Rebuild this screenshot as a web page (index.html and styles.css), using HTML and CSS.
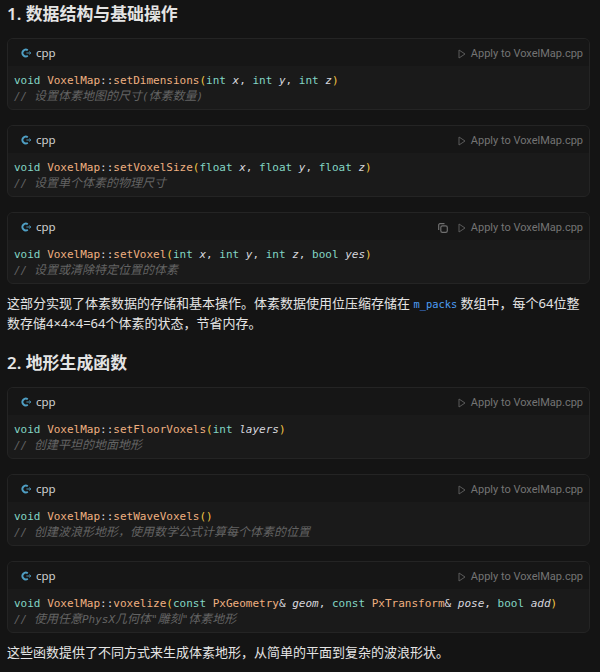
FILE: index.html
```html
<!DOCTYPE html>
<html lang="zh">
<head>
<meta charset="utf-8">
<title>VoxelMap</title>
<link rel="stylesheet" href="styles.css">
</head>
<body>
<svg class="defs" width="0" height="0" aria-hidden="true">
  <symbol id="cpp" viewBox="0 0 10 10">
    <path d="M6.800 2.200A3.400 3.400 0 1 0 6.800 7.800" fill="none" stroke="#4f9fc4" stroke-width="1.900"/>
    <path d="M5.400 5h4.400M8.300 3.600 9.800 5 8.300 6.400" fill="none" stroke="#4f9fc4" stroke-width="0.900"/>
  </symbol>
  <symbol id="play" viewBox="0 0 8 10">
    <path d="M1 1 7 5 1 9Z" fill="none" stroke="#5a5a5a" stroke-width="1"/>
  </symbol>
  <symbol id="copy" viewBox="0 0 10 10">
    <path d="M0.700 7V2A1.300 1.300 0 0 1 2 0.700H6.500" fill="none" stroke="#6f6f6f" stroke-width="1.200"/>
    <rect x="2.800" y="2.800" width="6.500" height="6.500" rx="1.600" fill="none" stroke="#6f6f6f" stroke-width="1.200"/>
  </symbol>
</svg>

<h2 class="title first">1. 数据结构与基础操作</h2>

<section class="block">
  <header class="bar"><svg class="lang"><use href="#cpp"/></svg><span class="name">cpp</span><span class="apply"><svg class="play"><use href="#play"/></svg>Apply to VoxelMap.cpp</span></header>
  <pre class="code"><span class="k">void</span> <span class="f">VoxelMap</span><span class="w">::</span><span class="f">setDimensions</span><span class="y">(</span><span class="k">int</span> <i>x</i><span class="w">,</span> <span class="k">int</span> <i>y</i><span class="w">,</span> <span class="k">int</span> <i>z</i><span class="y">)</span>
<span class="c">// <span class="z">设置体素地图的尺寸</span>(<span class="z">体素数量</span>)</span></pre>
</section>

<section class="block">
  <header class="bar"><svg class="lang"><use href="#cpp"/></svg><span class="name">cpp</span><span class="apply"><svg class="play"><use href="#play"/></svg>Apply to VoxelMap.cpp</span></header>
  <pre class="code"><span class="k">void</span> <span class="f">VoxelMap</span><span class="w">::</span><span class="f">setVoxelSize</span><span class="y">(</span><span class="k">float</span> <i>x</i><span class="w">,</span> <span class="k">float</span> <i>y</i><span class="w">,</span> <span class="k">float</span> <i>z</i><span class="y">)</span>
<span class="c">// <span class="z">设置单个体素的物理尺寸</span></span></pre>
</section>

<section class="block">
  <header class="bar"><svg class="lang"><use href="#cpp"/></svg><span class="name">cpp</span><span class="apply"><svg class="copy"><use href="#copy"/></svg><svg class="play"><use href="#play"/></svg>Apply to VoxelMap.cpp</span></header>
  <pre class="code"><span class="k">void</span> <span class="f">VoxelMap</span><span class="w">::</span><span class="f">setVoxel</span><span class="y">(</span><span class="k">int</span> <i>x</i><span class="w">,</span> <span class="k">int</span> <i>y</i><span class="w">,</span> <span class="k">int</span> <i>z</i><span class="w">,</span> <span class="k">bool</span> <i>yes</i><span class="y">)</span>
<span class="c">// <span class="z">设置或清除特定位置的体素</span></span></pre>
</section>

<p class="text">这部分实现了体素数据的存储和基本操作。体素数据使用位压缩存储在 <code class="inline">m_packs</code> 数组中，每个64位整数存储4×4×4=64个体素的状态，节省内存。</p>

<h2 class="title">2. 地形生成函数</h2>

<section class="block">
  <header class="bar"><svg class="lang"><use href="#cpp"/></svg><span class="name">cpp</span><span class="apply"><svg class="play"><use href="#play"/></svg>Apply to VoxelMap.cpp</span></header>
  <pre class="code"><span class="k">void</span> <span class="f">VoxelMap</span><span class="w">::</span><span class="f">setFloorVoxels</span><span class="y">(</span><span class="k">int</span> <i>layers</i><span class="y">)</span>
<span class="c">// <span class="z">创建平坦的地面地形</span></span></pre>
</section>

<section class="block">
  <header class="bar"><svg class="lang"><use href="#cpp"/></svg><span class="name">cpp</span><span class="apply"><svg class="play"><use href="#play"/></svg>Apply to VoxelMap.cpp</span></header>
  <pre class="code"><span class="k">void</span> <span class="f">VoxelMap</span><span class="w">::</span><span class="f">setWaveVoxels</span><span class="y">()</span>
<span class="c">// <span class="z">创建波浪形地形，使用数学公式计算每个体素的位置</span></span></pre>
</section>

<section class="block">
  <header class="bar"><svg class="lang"><use href="#cpp"/></svg><span class="name">cpp</span><span class="apply"><svg class="play"><use href="#play"/></svg>Apply to VoxelMap.cpp</span></header>
  <pre class="code"><span class="k">void</span> <span class="f">VoxelMap</span><span class="w">::</span><span class="f">voxelize</span><span class="y">(</span><span class="k">const</span> <span class="f">PxGeometry</span><span class="w">&amp;</span> <i>geom</i><span class="w">,</span> <span class="k">const</span> <span class="f">PxTransform</span><span class="w">&amp;</span> <i>pose</i><span class="w">,</span> <span class="k">bool</span> <i>add</i><span class="y">)</span>
<span class="c">// <span class="z">使用任意</span>PhysX<span class="z">几何体</span>"<span class="z">雕刻</span>"<span class="z">体素地形</span></span></pre>
</section>

<p class="text">这些函数提供了不同方式来生成体素地形，从简单的平面到复杂的波浪形状。</p>
</body>
</html>
```

FILE: styles.css
```css
html, body {
  margin: 0;
  padding: 0;
  background: #141414;
}
body {
  padding: 0 10px 0 7px;
  color: #e4e4e4;
  font-family: "Noto Sans", "Noto Sans CJK SC", sans-serif;
  font-size: 13px;
  line-height: 19px;
}
.defs {
  position: absolute;
}
.title {
  margin: 19px 0 13px;
  height: 22px;
  font-size: 16.9px;
  line-height: 22px;
  font-weight: 600;
  color: #e4e4e4;
}
.title.first {
  margin-top: 3px;
}
.block {
  margin-bottom: 15px;
  height: 72px;
  box-sizing: border-box;
  border: 1px solid #242424;
  border-radius: 6px;
  background: #1a1a1a;
  overflow: hidden;
}
.block:has(+ .text) {
  margin-bottom: 10px;
}
.bar {
  display: flex;
  align-items: center;
  height: 27px;
  padding: 0 6px 0 13px;
  background: #161616;
  font-size: 11px;
}
.lang {
  width: 10px;
  height: 10px;
  margin-right: 5px;
}
.name {
  color: #d0d0d0;
  font-size: 11.500px;
}
.apply {
  margin-left: auto;
  display: flex;
  align-items: center;
  padding-top: 2px;
  color: #747474;
  font-family: Roboto, sans-serif;
  font-size: 11px;
}
.play {
  width: 8px;
  height: 10px;
  margin-right: 5px;
}
.copy {
  width: 10px;
  height: 10px;
  margin-right: 10px;
}
.code {
  margin: 0;
  padding: 7px 6px 0;
  font-family: "DejaVu Sans Mono", "Noto Sans CJK SC", monospace;
  font-size: 11px;
  line-height: 16px;
  color: #d6d6dd;
}
.code i {
  color: #d6d6dd;
  font-style: italic;
}
.k { color: #83d6c5; }
.f { color: #efb080; }
.w { color: #d6d6dd; }
.y { color: #f2c744; }
.c {
  color: #636363;
  font-style: italic;
}
.z {
  font-family: "Noto Sans CJK SC", sans-serif;
  font-size: 12px;
  line-height: 0;
}
.text {
  margin: 0;
}
.inline {
  font-family: "DejaVu Sans Mono", monospace;
  font-size: 10.400px;
  color: #4c9df3;
}
```
